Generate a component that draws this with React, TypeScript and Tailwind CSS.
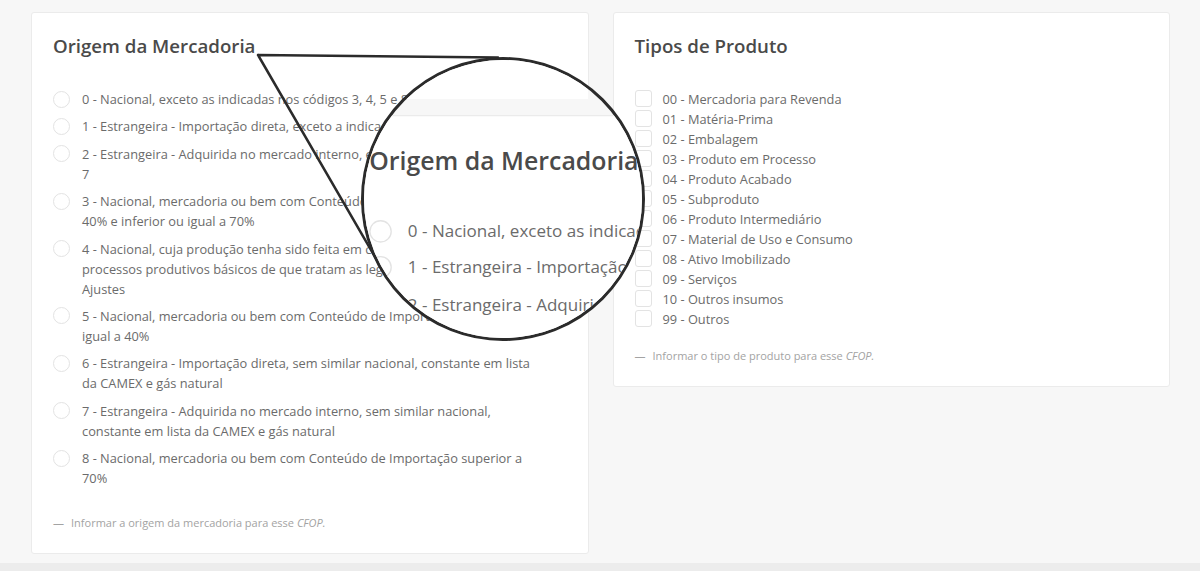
import type { ReactNode } from "react";

const ORIGENS = [
  "0 - Nacional, exceto as indicadas nos códigos 3, 4, 5 e 8",
  "1 - Estrangeira - Importação direta, exceto a indicada no código 6",
  "2 - Estrangeira - Adquirida no mercado interno, exceto a indicada no código 7",
  "3 - Nacional, mercadoria ou bem com Conteúdo de Importação superior a 40% e inferior ou igual a 70%",
  "4 - Nacional, cuja produção tenha sido feita em conformidade com os processos produtivos básicos de que tratam as legislações citadas nos Ajustes",
  "5 - Nacional, mercadoria ou bem com Conteúdo de Importação inferior ou igual a 40%",
  "6 - Estrangeira - Importação direta, sem similar nacional, constante em lista da CAMEX e gás natural",
  "7 - Estrangeira - Adquirida no mercado interno, sem similar nacional, constante em lista da CAMEX e gás natural",
  "8 - Nacional, mercadoria ou bem com Conteúdo de Importação superior a 70%"
];

const TIPOS = [
  "00 - Mercadoria para Revenda",
  "01 - Matéria-Prima",
  "02 - Embalagem",
  "03 - Produto em Processo",
  "04 - Produto Acabado",
  "05 - Subproduto",
  "06 - Produto Intermediário",
  "07 - Material de Uso e Consumo",
  "08 - Ativo Imobilizado",
  "09 - Serviços",
  "10 - Outros insumos",
  "99 - Outros"
];

function Card({ title, children, note }: { title: string; children: ReactNode; note: string }) {
  return (
    <section className="rounded-[3px] border border-[#ebebeb] bg-white px-[21px] pt-[20px] pb-[22px]">
      <h2 className="text-[18.7px] font-semibold leading-[26px] text-[#4a4a4a]">{title}</h2>
      <div className="mt-[30px] flex flex-col">{children}</div>
      <p className="mt-[19px] text-[11px] leading-[16px] text-[#a3a3a3]">
        <span className="mr-[7px]">—</span>
        {note} <span className="italic">CFOP.</span>
      </p>
    </section>
  );
}

function OrigemCard() {
  return (
    <Card title="Origem da Mercadoria" note="Informar a origem da mercadoria para esse">
      <ul>
        {ORIGENS.map((item) => (
          <li key={item} className="mb-[7.4px] flex items-start gap-3">
            <span className="mt-[1.5px] size-[17px] shrink-0 rounded-full border border-[#e3e3e3]" />
            <span className="w-[454px] text-[12.8px] leading-[20px] text-[#6b6b6b]">{item}</span>
          </li>
        ))}
      </ul>
    </Card>
  );
}

function TiposCard() {
  return (
    <Card title="Tipos de Produto" note="Informar o tipo de produto para esse">
      <ul>
        {TIPOS.map((item) => (
          <li key={item} className="flex items-start gap-[11px]">
            <span className="mt-[1px] size-[17px] shrink-0 rounded-[3px] border border-[#e3e3e3]" />
            <span className="text-[12.8px] leading-[20px] text-[#6b6b6b]">{item}</span>
          </li>
        ))}
      </ul>
    </Card>
  );
}

export default function App() {
  return (
    <div className="relative flex h-[571px] w-full flex-col overflow-hidden bg-[#f7f7f7] font-['Open_Sans',sans-serif]">
      <div className="grid flex-1 grid-cols-2 items-start gap-6 pt-[12px] pl-[31px] pr-[30px]">
        <OrigemCard />
        <TiposCard />
      </div>
      <div className="h-[8px] bg-[#ececec]" />

      {/* lupa */}
      <svg className="pointer-events-none absolute left-0 top-0" width="1200" height="571">
        <path d="M258 55 L498 57.5 M258 55 L382 269" stroke="#2b2b2b" strokeWidth="2.5" fill="none" strokeLinecap="round" />
      </svg>
      <div className="pointer-events-none absolute left-[361px] top-[57px] size-[284px] overflow-hidden rounded-full border-[3px] border-[#2b2b2b] bg-[#f7f7f7]">
        <div className="absolute left-0 top-0 h-[39px] w-[224px] bg-white" />
        <div className="absolute left-[-24px] top-[55px] w-[557px] origin-top-left scale-[1.33]">
          <OrigemCard />
        </div>
      </div>
    </div>
  );
}
